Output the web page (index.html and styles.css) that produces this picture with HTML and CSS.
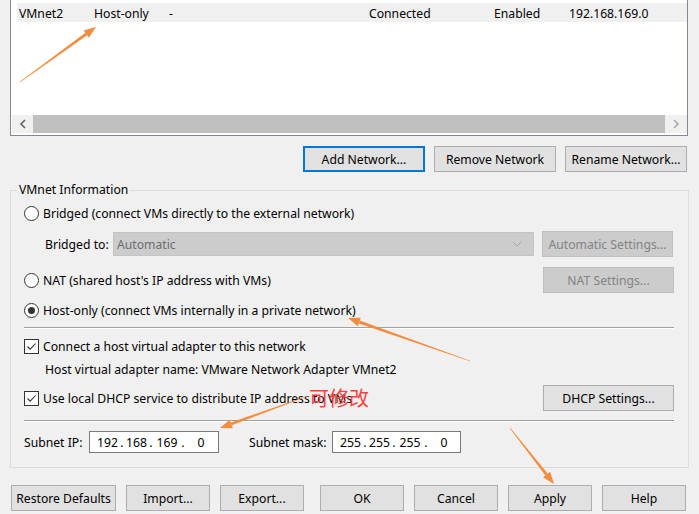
FILE: index.html
```html
<!DOCTYPE html>
<html>
<head>
<meta charset="utf-8">
<link rel="stylesheet" href="styles.css">
</head>
<body>
<div class="list">
  <div class="list-body">
    <div class="lrow sel">
      <span class="c c1">VMnet2</span>
      <span class="c c2">Host-only</span>
      <span class="c c3">-</span>
      <span class="c c4">Connected</span>
      <span class="c c5">Enabled</span>
      <span class="c c6">192.168.169.0</span>
    </div>
  </div>
  <div class="hscroll">
    <div class="sb-btn sb-left"><svg width="8" height="10" viewBox="0 0 8 10"><polyline points="6,1 2,5 6,9" fill="none" stroke="#606060" stroke-width="1.6"/></svg></div>
    <div class="sb-thumb"></div>
    <div class="sb-btn sb-right"><svg width="8" height="10" viewBox="0 0 8 10"><polyline points="2,1 6,5 2,9" fill="none" stroke="#a0a0a0" stroke-width="1.4"/></svg></div>
  </div>
</div>

<div class="net-buttons">
  <button class="btn btn-default w122">Add Network...</button>
  <button class="btn w122">Remove Network</button>
  <button class="btn w122">Rename Network...</button>
</div>

<div class="group">
  <span class="legend">VMnet Information</span>

  <div class="row r1">
    <span class="radio"></span><span class="lbl">Bridged (connect VMs directly to the external network)</span>
  </div>

  <div class="row r2 indent">
    <span class="lbl bridged-lbl">Bridged to:</span>
    <div class="select">
      <span class="lbl">Automatic</span>
      <svg width="10" height="6" viewBox="0 0 10 6"><polyline points="1,1 5,5 9,1" fill="none" stroke="#a6a6a6" stroke-width="1"/></svg>
    </div>
    <button class="btn btn-disabled w131 push">Automatic Settings...</button>
  </div>

  <div class="row r3">
    <span class="radio"></span><span class="lbl">NAT (shared host's IP address with VMs)</span>
    <button class="btn btn-disabled w131 push">NAT Settings...</button>
  </div>

  <div class="row r4">
    <span class="radio checked"></span><span class="lbl">Host-only (connect VMs internally in a private network)</span>
  </div>

  <div class="sep s1"></div>

  <div class="row r5">
    <span class="check"><svg width="13" height="13" viewBox="0 0 13 13"><polyline points="2.5,6.5 5.2,9.2 10.5,3.5" fill="none" stroke="#333" stroke-width="1.1"/></svg></span><span class="lbl">Connect a host virtual adapter to this network</span>
  </div>

  <div class="row r6 indent">
    <span class="lbl">Host virtual adapter name: VMware Network Adapter VMnet2</span>
  </div>

  <div class="row r7">
    <span class="check"><svg width="13" height="13" viewBox="0 0 13 13"><polyline points="2.5,6.5 5.2,9.2 10.5,3.5" fill="none" stroke="#333" stroke-width="1.1"/></svg></span><span class="lbl">Use local DHCP service to distribute IP address to VMs</span>
    <button class="btn w131 push">DHCP Settings...</button>
  </div>

  <div class="sep s2"></div>

  <div class="row r8">
    <span class="lbl ip-lbl">Subnet IP:</span>
    <div class="ip ip1">
      <span class="f f1">192</span><span class="d">.</span><span class="f f2">168</span><span class="d">.</span><span class="f f3">169</span><span class="d">.</span><span class="f f4">0</span>
    </div>
    <span class="lbl mask-lbl">Subnet mask:</span>
    <div class="ip ip2">
      <span class="f f1">255</span><span class="d">.</span><span class="f f2">255</span><span class="d">.</span><span class="f f3">255</span><span class="d">.</span><span class="f f4">0</span>
    </div>
  </div>
</div>

<div class="bottom">
  <div class="bgroup">
    <button class="btn w105">Restore Defaults</button>
    <button class="btn w84">Import...</button>
    <button class="btn w84">Export...</button>
  </div>
  <div class="bgroup">
    <button class="btn w84">OK</button>
    <button class="btn w84">Cancel</button>
    <button class="btn w84">Apply</button>
    <button class="btn w84">Help</button>
  </div>
</div>

<span class="note">可修改</span>

<svg class="annot" width="699" height="514" viewBox="0 0 699 514">
  <g fill="#f48c3e">
    <polygon points="20.18,82.24 87.16,35.25 85.40,32.81 19.82,81.76"/>
    <polygon points="96,27 88.92,37.68 83.64,30.38"/>
    <polygon points="470.10,360.72 359.81,320.58 358.81,323.40 469.90,361.28"/>
    <polygon points="348,318 360.80,317.75 357.82,326.23"/>
    <polygon points="308.10,396.28 231.79,425.31 230.77,422.49 307.90,395.72"/>
    <polygon points="220,428 232.82,428.13 229.74,419.67"/>
    <polygon points="510.24,427.81 547.76,473.64 545.40,475.50 509.76,428.19"/>
    <polygon points="554,484 550.12,471.79 543.04,477.35"/>
  </g>
</svg>
</body>
</html>
```

FILE: styles.css
```css
html, body {
  margin: 0;
  padding: 0;
}
body {
  width: 699px;
  height: 514px;
  overflow: hidden;
  background: #f0f0f0;
  font-family: "Noto Sans", "Open Sans", sans-serif;
  font-size: 12.2px;
  line-height: 16px;
  color: #000;
  position: relative;
}

/* list view */
.list {
  margin-left: 10px;
  width: 676px;
  border: 1px solid #828790;
  border-top: none;
  padding: 0 0 2px 0;
  background: #fff;
  box-sizing: content-box;
}
.list-body {
  height: 112px;
  padding: 3px 0 0 5px;
  margin-left: 1px;
}
.lrow {
  height: 19px;
  display: flex;
  align-items: center;
}
.lrow.sel {
  background: #f0f0f0;
}
.c { display: block; white-space: nowrap; padding-top: 2px; }
.c1 { width: 75px; padding-left: 2px; }
.c2 { width: 75px; }
.c3 { width: 200px; }
.c4 { width: 125px; }
.c5 { width: 75px; }
.c6 { width: 100px; }

.hscroll {
  height: 18px;
  margin-left: 1px;
  display: flex;
}
.sb-btn {
  background: #f0f0f0;
  display: flex;
  align-items: center;
  justify-content: center;
}
.sb-left { width: 21px; }
.sb-right { width: 22px; }
.sb-thumb {
  flex: 1;
  background: #c0c0c0;
}

/* buttons */
.btn {
  font-family: inherit;
  font-size: 12.2px;
  line-height: 16px;
  height: 26px;
  margin: 0;
  padding: 2px 0 0 0;
  background: #e1e1e1;
  border: 1px solid #adadad;
  color: #000;
  box-sizing: border-box;
  white-space: nowrap;
}
.btn-default {
  border: 2px solid #0078d7;
}
.btn-disabled {
  background: #cccccc;
  border-color: #bfbfbf;
  color: #838383;
}
.w122 { width: 122px; }
.w131 { width: 131px; }
.w105 { width: 105px; }
.w84 { width: 84px; }

.net-buttons {
  margin-top: 10px;
  display: flex;
  justify-content: flex-end;
  gap: 9px;
  padding-right: 12px;
}

/* group */
.group {
  position: relative;
  margin: 18px 10px 0 10px;
  border: 1px solid #dcdcdc;
  padding: 9px 14px 14px 13px;
}
.legend {
  position: absolute;
  top: -9px;
  left: 6px;
  padding: 0 2px;
  background: #f0f0f0;
  line-height: 16px;
}
.row {
  display: flex;
  align-items: center;
  height: 26px;
  white-space: nowrap;
}
.lbl { padding-top: 2px; }
.indent { padding-left: 21px; }
.push { margin-left: auto; }
.r2 { margin-top: 5px; }
.r3 { margin-top: 10px; }
.r4 { margin-top: 4px; }
.r5 { margin-top: 7px; height: 20px; }
.r6 { margin-top: 3px; height: 20px; }
.r7 { margin-top: 6px; }
.r8 { margin-top: 9px; height: 22px; }

.sep {
  height: 0;
  border-top: 1px solid #a0a0a0;
  border-bottom: 1px solid #ffffff;
}
.s1 { margin-top: 4px; }
.s2 { margin-top: 9px; }

.radio {
  width: 13px;
  height: 13px;
  border: 1px solid #333;
  border-radius: 50%;
  background: #fff;
  margin-right: 4px;
  position: relative;
  flex: none;
}
.radio.checked::after {
  content: "";
  position: absolute;
  left: 3px;
  top: 3px;
  width: 7px;
  height: 7px;
  border-radius: 50%;
  background: #333;
}
.check {
  width: 13px;
  height: 13px;
  border: 1px solid #333;
  background: #fff;
  margin-right: 4px;
  flex: none;
  display: flex;
}

.bridged-lbl { width: 68px; }
.select {
  width: 421px;
  height: 24px;
  box-sizing: border-box;
  background: #cccccc;
  border: 1px solid #c4c4c4;
  display: flex;
  align-items: center;
  justify-content: space-between;
  padding: 0 11px 0 3px;
  color: #6d6d6d;
}
.r2 .push { margin-left: 8px; }

.ip-lbl { width: 65px; }
.mask-lbl { margin-left: 30px; width: 83px; }
.ip {
  height: 22px;
  box-sizing: border-box;
  border: 1px solid #7a7a7a;
  background: #fff;
  display: flex;
  align-items: center;
  padding-left: 7px;
}
.ip1 { width: 130px; }
.ip2 { width: 129px; }
.f { display: block; text-align: center; padding-top: 2px; }
.f1 { width: 21px; }
.f2 { width: 21px; }
.f3 { width: 24px; }
.f4 { width: 28px; }
.d { display: block; width: 8px; text-align: center; padding-top: 2px; }

/* bottom buttons */
.bottom {
  margin-top: 17px;
  display: flex;
  justify-content: space-between;
  padding: 0 13px 0 11px;
}
.bgroup {
  display: flex;
  gap: 10px;
}

/* annotations */
.note {
  position: absolute;
  left: 309px;
  top: 387px;
  font-family: "Noto Sans CJK SC", sans-serif;
  font-size: 20px;
  line-height: 22px;
  color: #ff3d3d;
}
.annot {
  position: absolute;
  left: 0;
  top: 0;
  pointer-events: none;
}
```
